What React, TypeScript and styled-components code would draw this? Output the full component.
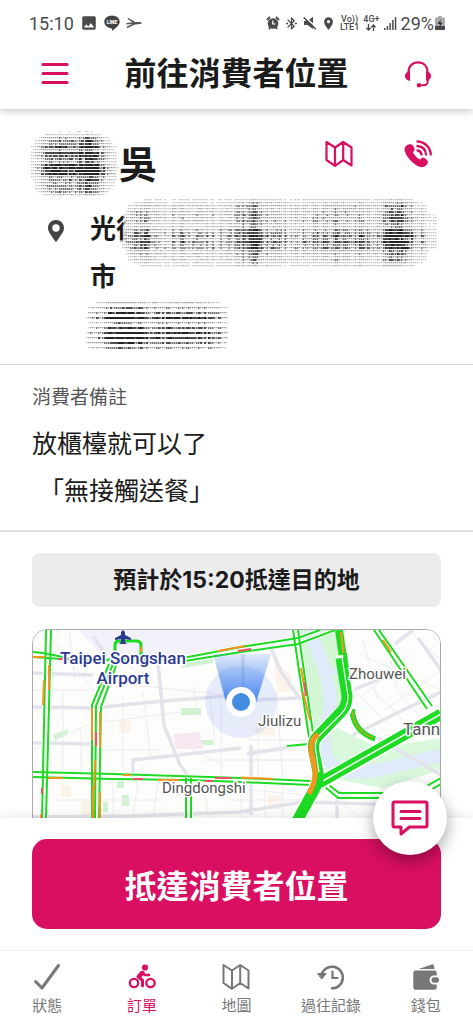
import React from "react";
import styled, { createGlobalStyle } from "styled-components";
import { MdImage, MdBluetoothConnected, MdLocationOn } from "react-icons/md";

const PINK = "#d90f62";
const GREY = "#777";
const INK = "#1b1b1b";

const GlobalStyle = createGlobalStyle`
  * { box-sizing: border-box; }
  body { margin: 0; background: #fff; }
  body, button { font-family: Inter, "Noto Sans CJK TC", sans-serif; color: ${INK}; }
  button { border: 0; padding: 0; background: none; cursor: pointer; }
  h1, h2, p { margin: 0; }
  svg { display: block; flex: none; }
`;

const Screen = styled.div`
  display: flex;
  flex-direction: column;
  height: 100vh;
  overflow: hidden;
`;

const Header = styled.header`
  position: relative;
  z-index: 2;
  background: #fff;
  box-shadow: 0 2px 8px rgba(0, 0, 0, 0.22);
`;

const StatusBar = styled.div`
  display: flex;
  justify-content: space-between;
  align-items: center;
  height: 46px;
  padding: 0 28px 0 29px;
  color: #4a4a4a;
  font-family: Roboto, sans-serif;
  font-size: 18px;
`;

const StatusGroup = styled.div<{ $gap: number }>`
  display: flex;
  align-items: center;
  gap: ${(p) => p.$gap}px;
`;

const Network = styled.span`
  font-size: 9px;
  line-height: 8px;
  font-weight: 500;
  text-align: center;
`;

const Battery = styled.span`
  display: flex;
  align-items: center;
  gap: 1px;
`;

const TitleBar = styled.div`
  display: flex;
  align-items: center;
  justify-content: space-between;
  height: 63px;
  padding: 0 40px 8px;
`;

const Title = styled.h1`
  font-size: 32px;
  line-height: 40px;
  font-weight: 700;
`;

const IconButton = styled.button`
  display: flex;
  align-items: center;
  justify-content: center;
  width: 30px;
  height: 40px;
  color: ${PINK};
`;

const Content = styled.main`
  flex: 1;
  min-height: 0;
  overflow-y: auto;
  scrollbar-width: none;
`;

const Customer = styled.section`
  padding: 21px 34px 15px 0;
  border-bottom: 1px solid #d9d9d9;
`;

const NameRow = styled.div`
  display: flex;
  align-items: center;
  height: 68px;
  padding: 0 6px 0 27px;
`;

const Name = styled.h2`
  flex: 1;
  font-size: 38px;
  line-height: 56px;
  font-weight: 700;
`;

const Actions = styled.div`
  display: flex;
  gap: 49px;
  padding-bottom: 20px;
`;

const Address = styled.div`
  position: relative;
  display: flex;
  gap: 26px;
  padding: 0 0 0 48px;
  margin-top: 7px;
  font-size: 26px;
  line-height: 48px;
  font-weight: 700;
`;

const PinSlot = styled.span`
  display: flex;
  align-items: center;
  height: 52px;
`;

const AddressLine = styled.p`
  height: 48px;
`;

const AddressCover = styled.div`
  position: absolute;
  top: -10px;
  left: 118px;
  right: 0;
  background: linear-gradient(to right, transparent 4px, #fff 9px);
`;

const PhoneCover = styled.div`
  position: absolute;
  top: 96px;
  left: 84px;
`;

const Note = styled.section`
  padding: 21px 32px 15px;
  border-bottom: 2px solid #dedede;
`;

const NoteLabel = styled.h2`
  font-size: 19px;
  line-height: 24px;
  font-weight: 400;
  color: #555;
  margin-bottom: 11px;
`;

const NoteText = styled.p`
  font-size: 25px;
  line-height: 47px;
  white-space: pre-wrap;
`;

const Trip = styled.section`
  display: flex;
  flex-direction: column;
  gap: 22px;
  padding: 21px 32px;
`;

const Eta = styled.p`
  padding: 11px 0;
  border-radius: 8px;
  background: #ececec;
  font-size: 23px;
  line-height: 32px;
  font-weight: 700;
  text-align: center;
`;

const MapCard = styled.div`
  height: 300px;
  overflow: hidden;
  border: 1px solid #aaa;
  border-radius: 15px;
`;

const MapLabel = styled.text<{ $size: number; $airport?: boolean }>`
  font-family: Roboto, sans-serif;
  font-size: ${(p) => p.$size}px;
  font-weight: ${(p) => (p.$airport ? 500 : 400)};
  fill: ${(p) => (p.$airport ? "#2c3a94" : "#555")};
  stroke: #fff;
  stroke-width: 3px;
  paint-order: stroke;
  stroke-linejoin: round;
`;

const Sheet = styled.footer`
  position: relative;
  z-index: 2;
  background: #fff;
  box-shadow: 0 0 12px rgba(0, 0, 0, 0.12);
`;

const ActionArea = styled.div`
  padding: 21px 32px;
`;

const ArriveButton = styled.button`
  width: 100%;
  height: 90px;
  border-radius: 15px;
  background: ${PINK};
  color: #fff;
  font-size: 32px;
  font-weight: 700;
`;

const ChatButton = styled.button`
  position: absolute;
  top: -37px;
  right: 26px;
  display: flex;
  align-items: center;
  justify-content: center;
  width: 74px;
  height: 74px;
  border-radius: 50%;
  background: #fff;
  color: ${PINK};
  box-shadow: 0 6px 16px rgba(0, 0, 0, 0.35);
`;

const TabBar = styled.nav`
  display: grid;
  grid-template-columns: repeat(5, 1fr);
  height: 74px;
  border-top: 1px solid #eee;
`;

const Tab = styled.a<{ $active?: boolean }>`
  display: flex;
  flex-direction: column;
  align-items: center;
  gap: 4px;
  padding-top: 12px;
  color: ${(p) => (p.$active ? PINK : GREY)};
  font-size: 15px;
  line-height: 22px;
  text-decoration: none;
  white-space: nowrap;
`;

/* ---------- redaction texture ---------- */

type SmudgeProps = {
  width: number;
  height: number;
  seed: number;
  rowStep: number;
  dark: [number, number, number][];
  fluid?: boolean;
  round?: boolean;
};

const noise = (n: number) => {
  const v = Math.sin(n * 127.1) * 43758.5453;
  return v - Math.floor(v);
};

function Smudge({ width, height, seed, rowStep, dark, fluid, round }: SmudgeProps) {
  const buckets: string[] = ["", "", "", "", ""];
  for (let y = 1; y < height - 1; y += rowStep) {
    const rowLevel = 0.3 + 0.7 * noise(y + seed);
    for (let x = 0; x < width; x += 2) {
      const nx = (x / width) * 2 - 1;
      const ny = (y / height) * 2 - 1;
      const power = round ? 4 : 12;
      const fade = rowStep > 3 ? 8 : 2.5;
      const edge = Math.max(0, 1 - Math.pow(Math.abs(nx), power) - Math.pow(Math.abs(ny), fade));
      let level = 0.15 + 0.5 * noise(x * 3 + seed);
      dark.forEach(([center, spread, amount]) => {
        level += amount * Math.exp(-Math.pow((x - center) / spread, 2));
      });
      const value = level * rowLevel * edge * (0.7 + 0.5 * noise(x * 7 + y * 13));
      const index = Math.min(4, Math.floor(value * 6.5));
      if (value > 0.04) {
        buckets[index] += `M${x} ${y}h${index > 2 ? 2 : 1.5}v${index > 1 ? 2 : 1.3}h-${index > 2 ? 2 : 1.5}z`;
      }
    }
  }
  return (
    <svg
      width={fluid ? "100%" : width}
      height={height}
      viewBox={`0 0 ${width} ${height}`}
      preserveAspectRatio="none"
      aria-hidden="true"
    >
      {buckets.map((d, i) => (
        <path key={i} d={d} fill="#111" opacity={0.24 + i * 0.17} />
      ))}
    </svg>
  );
}

/* ---------- icons ---------- */

const MenuIcon = () => (
  <svg width="28" height="24" viewBox="0 0 28 24" stroke="currentColor" strokeWidth="3.2" strokeLinecap="round">
    <path d="M2 2.5h24M2 11.500h24M2 20.500h24" />
  </svg>
);

const HeadsetIcon = () => (
  <svg width="28" height="28" viewBox="0 0 28 28" fill="none" stroke="currentColor">
    <path d="M4.500 12.500C4.500 6 8.500 2.300 14 2.300S23.500 6 23.500 12.500" strokeWidth="2.200" />
    <path d="M23.800 19v1.500c0 3-1.500 4.800-4.300 4.800H15" strokeWidth="1.900" />
    <path d="M6 11v10C3 20.500.9 18.500.9 16S3 11.500 6 11ZM22 11v10c3-.5 5.100-2.500 5.100-5S25 11.500 22 11Z" fill="currentColor" stroke="none" />
    <circle cx="15" cy="25.200" r="2.200" fill="currentColor" stroke="none" />
  </svg>
);

const PhoneIcon = () => (
  <svg width="28" height="28" viewBox="0 0 28 28" fill="none" stroke="currentColor" strokeWidth="2.300" strokeLinecap="round">
    <path
      d="M7.500 4.500C5 3.500 1 5.500.5 9 .5 15 9 25 16.500 27c3 1 7-1.500 7.500-5 .2-1.500-4-5.200-5.500-4.500L16 19.500C13 18 10.500 15.500 9 12.500L10.500 10C11 8.500 9 5 7.500 4.500Z"
      fill="currentColor"
      stroke="none"
    />
    <path d="M13.500 1.500C21 2 26.500 7.500 26.800 14.500M13.500 6C18.500 6.500 21.700 9.800 22 14.500M13.500 10.500c2.300.3 3.700 1.700 4 4" />
  </svg>
);

const FoldMapIcon = ({ stroke = 2.2 }: { stroke?: number }) => (
  <svg width="28" height="28" viewBox="0 0 28 28" fill="none" stroke="currentColor" strokeWidth={stroke} strokeLinejoin="round">
    <path d="M1.500 2 10 7.500 18.200 2 26.500 7.500v18L18.200 20 10 25.800 1.500 20ZM10 7.500v18M18.200 2V20" />
  </svg>
);

const PinIcon = () => (
  <svg width="16" height="22" viewBox="0 0 16 22">
    <path fill="#444" fillRule="evenodd" d="M8 0C3.500 0 0 3.400 0 7.800 0 13 4.500 16.500 6.800 20.800q1.200 1.800 2.400 0C11.500 16.500 16 13 16 7.800 16 3.400 12.500 0 8 0Zm0 4.300a3.700 3.700 0 1 1 0 7.400 3.700 3.700 0 0 1 0-7.400Z" />
  </svg>
);

const ChatIcon = () => (
  <svg width="38" height="36" viewBox="0 0 38 36" fill="none" stroke="currentColor" strokeWidth="3" strokeLinejoin="round" strokeLinecap="round">
    <path d="M3.500 2h31a1.500 1.500 0 0 1 1.500 1.500v22a1.500 1.500 0 0 1-1.500 1.500H18.500L10 34v-7H3.500A1.500 1.500 0 0 1 2 25.500v-22A1.500 1.500 0 0 1 3.500 2ZM10 11.500h19M10 18.500h19" />
  </svg>
);

const CheckIcon = () => (
  <svg width="28" height="28" viewBox="0 0 28 28" fill="none" stroke="currentColor" strokeWidth="3" strokeLinecap="round" strokeLinejoin="round">
    <path d="M2.500 18.500 9 25 25.500 2.500" />
  </svg>
);

const BikeIcon = () => (
  <svg width="28" height="28" viewBox="0 0 28 28" fill="none" stroke="currentColor" strokeLinecap="round" strokeLinejoin="round">
    <circle cx="6" cy="20" r="4.200" strokeWidth="2.300" />
    <circle cx="22.500" cy="20" r="4.200" strokeWidth="2.300" />
    <circle cx="17" cy="4.500" r="3.100" fill="currentColor" stroke="none" />
    <path d="M13.500 9.500 10 13.800l4.500 3.400v5.600" strokeWidth="3" />
    <path d="M13.800 9.200 17 12h4" strokeWidth="2.600" />
    <path d="M11 13.500 14.500 10" strokeWidth="4.200" />
  </svg>
);

const HistoryIcon = () => (
  <svg width="28" height="28" viewBox="0 0 28 28" fill="none" stroke="currentColor" strokeWidth="2.600" strokeLinecap="round">
    <path d="M4.500 12A10.800 10.800 0 1 1 15 25.300" />
    <path d="M15.500 8.500v6.500h5" strokeWidth="2.200" />
    <path d="M.8 10.500h8.400L5 15.800Z" fill="currentColor" strokeWidth="1" strokeLinejoin="round" />
  </svg>
);

const WalletIcon = () => (
  <svg width="28" height="28" viewBox="0 0 28 28" fill="currentColor">
    <path d="M6.500 6 20.500 1.200q1-.2 1.200.8L22.500 6Z" />
    <path d="M3.500 7.500h19a2.200 2.200 0 0 1 2.200 2.200v2.800H22a4.500 4.500 0 0 0 0 9h2.700v3a2.200 2.200 0 0 1-2.200 2.200h-19a2.200 2.200 0 0 1-2.200-2.200V9.700a2.200 2.200 0 0 1 2.200-2.200Z" />
    <rect x="19.500" y="14.200" width="7.500" height="5.600" rx="2.500" />
  </svg>
);

const AlarmIcon = () => (
  <svg width="14" height="14" viewBox="0 0 14 14">
    <path d="M1 4 4 1M10 1l3 3M3 13l1.500-2M11 13l-1.500-2" stroke="#4a4a4a" strokeWidth="2" />
    <circle cx="7" cy="7.500" r="5.300" fill="#4a4a4a" />
    <path d="M6.800 4.500V8H9.500" fill="none" stroke="#fff" strokeWidth="1.200" />
  </svg>
);

const MuteIcon = () => (
  <svg width="14" height="14" viewBox="0 0 14 14">
    <path d="M1 5H4.500L10 .8V13L4.500 9H1Z" fill="#4a4a4a" />
    <path d="M1.500 .5 14 12" stroke="#fff" strokeWidth="1.500" />
    <path d="M.7 1.500 12.800 13.300" stroke="#4a4a4a" strokeWidth="1.600" />
  </svg>
);

const LineAppIcon = () => (
  <svg width="16" height="16" viewBox="0 0 16 16">
    <path d="M8 .5c4.300 0 7.700 2.800 7.700 6.300 0 3-3 5.700-7 8.700-.6.400-.8.200-.7-.5l.1-1.600C3.500 13.200.3 10.300.3 6.800.3 3.300 3.700.5 8 .5Z" fill="#444" />
    <text x="8" y="8.800" textAnchor="middle" fontSize="5" fontWeight="900" fontFamily="Roboto" fill="#fff">LINE</text>
  </svg>
);

const ArrowAppIcon = () => (
  <svg width="16" height="12" viewBox="0 0 16 12" fill="none" stroke="#555" strokeWidth="1.500">
    <path d="M2 1.500 8 5.500 15.500 6 8 7 1 10.500M.5 6.800 8 6M6 3.500 9 6" />
  </svg>
);

const SignalIcon = () => (
  <svg width="13" height="13" viewBox="0 0 13 13" fill="#4a4a4a">
    <path d="M0 11h1.500v2H0zM2.700 9h1.500v4H2.700zM5.400 6h1.500v7H5.400zM8.100 3h1.500v10H8.100zM10.800 0h1.500v13h-1.500z" />
  </svg>
);

const BatteryIcon = () => (
  <svg width="10" height="14" viewBox="0 0 10 14">
    <path d="M3 0h4v1.500h2q1 0 1 1V13q0 1-1 1H1q-1 0-1-1V2.500q0-1 1-1h2Z" fill="#aaa" />
    <path d="M0 10h10v3q0 1-1 1H1q-1 0-1-1Z" fill="#4a4a4a" />
    <path d="M6 3 2.500 8H5l-.8 3.500L7.700 6.500H5.200Z" fill="#333" />
  </svg>
);

const NetworkArrows = () => (
  <svg width="10" height="7" viewBox="0 0 10 7" fill="none" stroke="#4a4a4a" strokeWidth="1.300">
    <path d="M2.500 0v6M.4 3.800 2.500 6l2.100-2.200M7.500 7V1M5.400 3.200 7.500 1l2.100 2.200" />
  </svg>
);

const NetworkColumn = styled.span`
  display: flex;
  flex-direction: column;
  align-items: center;
  gap: 1px;
`;

/* ---------- map ---------- */

const GREEN = "#1ddb22";
const ORANGE = "#f7941d";
const RED = "#f0506a";

const minorStreets =
  "M0 60H60M100 55 205 66M20 10 62 62M0 120 66 90M20 170H130M75 20 130 60M110 62 118 130M160 56 165 88M176 60 182 110M70 92 150 82M68 120H130M90 66V140M48 100V142M30 60V140M80 150V189M105 150 100 189M125 150 120 189M170 152 176 189M225 100V150M243 60 250 150M215 110H276M214 120H278M214 130H280M220 160 270 165M196 170H270M208 152V189M232 152V189M250 152V189M326 24 408 60M330 66 380 20M352 80 408 40M322 60 350 90M350 0 365 60M375 0 408 30M362 60 400 100M340 110 350 125M330 10 345 70M320 40 370 90M340 180 408 170M310 175 330 189M350 172 360 189M380 158 390 189M150 115 190 135M170 130H250M188 70V150M20 20V60M36 0 42 50";

const majorStreets =
  "M0 77 60 78 130 71 208 65M0 43 60 45M0 113 62 114M125 33 131 95 147 135 158 150M100 150V130L208 118M0 187 100 186 206 182 270 172 340 174 408 184M238 18 248 42 268 70M222 70 264 68M210 22V60M275 114 214 124M218 115V185M304 168V189M320 105 360 85 408 62M362 14 380 0M385 8 408 40M320 60 370 40M345 108 408 145M60 6 70 20";

const thinRoads = [
  "M13 0 9 189M18 0 13 189",
  "M0 22 10 23 45 30 150 28 208 17 265 8 287 0M0 27 42 30 152 31 208 22 265 14 302 0",
  "M0 142 80 144 208 148 278 151M0 147 80 149 155 150 208 152 278 155",
  "M76 34 59 75V189M80 34 63 76 62 189M83 36 68 77 66 189",
  "M153 148V189M158 148V189",
  "M260 0 277 114M265 0 281 110",
  "M254 116 276 114",
  "M341 0 394 79M346 0 399 76",
  "M291 156 305 168H360M296 155 306 163H360",
  "M390 158 408 148M394 162 408 154",
];

function TrafficMap() {
  return (
    <svg width="100%" height="300" viewBox="0 0 407 300" preserveAspectRatio="xMidYMin slice" role="img" aria-label="Map">
      <defs>
        <linearGradient id="beam" x1="0" y1="0" x2="0" y2="1">
          <stop offset="0" stopColor="#3b7ff0" stopOpacity="0.15" />
          <stop offset="0.600" stopColor="#3b7ff0" stopOpacity="0.65" />
          <stop offset="1" stopColor="#3b7ff0" />
        </linearGradient>
      </defs>
      <rect width="410" height="300" fill="#fdfdfc" />
      <path d="M45 0H260L262 12 150 34 72 28Z" fill="#f3f1fa" />
      <path d="M265 0H304L312 68 280 106Z" fill="#d3f7d5" />
      <path d="M284 112 300 96 345 118 408 108V140L350 158 296 148Z" fill="#d9f8dc" />
      <path d="M20 105 35 99V103L22 111ZM148 78h20v7h-20ZM168 110h13v5h-13ZM84 150h7v8h-7ZM89 165h7v11h-7ZM70 172h5v10h-5ZM152 29 180 26V33L148 38Z" fill="#cff3d1" />
      <path d="M140 104 167 102 170 119H143Z" fill="#f7e8f2" />
      <path d="M86 90h12v13H86ZM28 155h10v12H28ZM240 30 258 45V62H245ZM222 95h20v10h-20ZM235 165h14v14h-14ZM48 170h12v15H48Z" fill="#fcf3ea" />
      <path d="M276 0C284 20 292 34 296 60S290 95 291 112 297 141 318 142 355 138 408 125" fill="none" stroke="#dfeafa" strokeWidth="13" />
      <path d="M280 28 306 44" stroke="#dfeafa" strokeWidth="4" />
      <path d={minorStreets} fill="none" stroke="#ececf0" strokeWidth="1" />
      <path d={majorStreets} fill="none" stroke="#e3e3ec" strokeWidth="3.500" />

      {thinRoads.map((d) => (
        <path key={d} d={d} fill="none" stroke="#fff" strokeWidth="4" />
      ))}
      {thinRoads.map((d) => (
        <path key={`road-${d}`} d={d} fill="none" stroke={GREEN} strokeWidth="2" />
      ))}
      <path d="M82 26V15Q82 11 86 11H103Q108 11 108 15V26Q98 32 82 26" fill="none" stroke={GREEN} strokeWidth="3" />
      <path d="M16 35V60M11 50 10 75M0 27H12M185 21 212 16M59 78V110M67 82V118M62 130 61 160M60 156V189M67 162V189M15 148H30M90 145H98M125 150H146M208 147.500 240 149M268 38 272 60M270 62 277 90M350 10 358 22M8 184V189M108 17V22" fill="none" stroke={ORANGE} strokeWidth="2" />
      <path d="M25 29H40M205 21 218 19M63 102V116M100 149H110M182 148H198M9 158V164M271 52 273 66M172 151H180" fill="none" stroke={RED} strokeWidth="2" />

      <g fill="none" strokeLinejoin="round">
        <path d="M319 79Q320 101 342 109" stroke={GREEN} strokeWidth="5.500" />
        <path d="M319 81Q321 100 340 108" stroke={ORANGE} strokeWidth="1.200" />
        <path d="M306 0 310 28" stroke={GREEN} strokeWidth="8" />
        <path d="M308 2 311 28" stroke={ORANGE} strokeWidth="2" />
        <path d="M310 25 315 66Q315 77 309 83L284 107Q279 112 281 122L285 142Q286 153 281 160L264 191" stroke="#fff" strokeWidth="14" />
        <path d="M287 153 408 84" stroke="#fff" strokeWidth="14" />
        <path d="M286 153 408 84" stroke={GREEN} strokeWidth="11" />
        <path d="M288 152 408 84" stroke="#fff" strokeWidth="1.500" />
        <path d="M308 28 314 66Q314 76 308 82L284 107Q279 112 281 122L285 142Q286 153 281 160L264 191" stroke={GREEN} strokeWidth="11" />
        <path d="M309 27 315 66Q315 77 309 83L285 107Q281 113 283 122L286 142" stroke="#fff" strokeWidth="1.200" />
        <path d="M312 24 314 40" stroke={GREEN} strokeWidth="4" strokeLinecap="round" />
        <path d="M285 104Q277 111 278 121L282 140Q283 151 276 164" stroke={ORANGE} strokeWidth="5" />
      </g>

      <circle cx="208" cy="72" r="36" fill="#4c7df0" opacity="0.130" />
      <path d="M180 24H238L222 76H194Z" fill="url(#beam)" />
      <circle cx="208" cy="72" r="15" fill="#fff" />
      <circle cx="208" cy="72" r="9" fill="#448ce0" />

      <path d="M90 0 92 2V5L98 8V10L92 9V12L94 14H86L88 12V9L82 10V8L88 5V2Z" fill="#2c3a94" />
      <MapLabel $size={17} $airport x="90" y="34" textAnchor="middle">Taipei Songshan</MapLabel>
      <MapLabel $size={17} $airport x="90" y="54" textAnchor="middle">Airport</MapLabel>
      <MapLabel $size={15} x="225" y="96">Jiulizu</MapLabel>
      <MapLabel $size={15} x="316" y="49">Zhouwei</MapLabel>
      <MapLabel $size={17} x="370" y="105">Tann</MapLabel>
      <MapLabel $size={15} x="129" y="163">Dingdongshi</MapLabel>
    </svg>
  );
}

export default function App() {
  return (
    <Screen>
      <GlobalStyle />
      <Header>
        <StatusBar>
          <StatusGroup $gap={6}>
            <span>15:10</span>
            <MdImage size={18} />
            <LineAppIcon />
            <ArrowAppIcon />
          </StatusGroup>
          <StatusGroup $gap={4}>
            <AlarmIcon />
            <MdBluetoothConnected size={15} />
            <MuteIcon />
            <MdLocationOn size={15} />
            <Network>
              Vo))
              <br />
              LTE1
            </Network>
            <NetworkColumn>
              <Network>4G+</Network>
              <NetworkArrows />
            </NetworkColumn>
            <SignalIcon />
            <Battery>
              29%
              <BatteryIcon />
            </Battery>
          </StatusGroup>
        </StatusBar>
        <TitleBar>
          <IconButton aria-label="Menu">
            <MenuIcon />
          </IconButton>
          <Title>前往消費者位置</Title>
          <IconButton aria-label="Support">
            <HeadsetIcon />
          </IconButton>
        </TitleBar>
      </Header>

      <Content>
        <Customer>
          <NameRow>
            <Smudge width={92} height={68} seed={4} rowStep={3} dark={[[26, 16, 0.6], [62, 16, 0.7]]} round />
            <Name>吳</Name>
            <Actions>
              <IconButton aria-label="Open map">
                <FoldMapIcon />
              </IconButton>
              <IconButton aria-label="Call">
                <PhoneIcon />
              </IconButton>
            </Actions>
          </NameRow>
          <Address>
            <PinSlot>
              <PinIcon />
            </PinSlot>
            <div>
              <AddressLine>光復</AddressLine>
              <AddressLine>市</AddressLine>
              <AddressLine />
            </div>
            <AddressCover>
              <Smudge
                width={320}
                height={74}
                seed={9}
                rowStep={3}
                dark={[[18, 14, 0.4], [134, 12, 0.6], [225, 20, 0.3], [278, 14, 0.8]]}
                fluid
              />
            </AddressCover>
            <PhoneCover>
              <Smudge width={144} height={50} seed={2} rowStep={5} dark={[[40, 18, 0.8], [100, 40, 0.4]]} />
            </PhoneCover>
          </Address>
        </Customer>

        <Note>
          <NoteLabel>消費者備註</NoteLabel>
          <NoteText>{"放櫃檯就可以了\n 「無接觸送餐」"}</NoteText>
        </Note>

        <Trip>
          <Eta>預計於15:20抵達目的地</Eta>
          <MapCard>
            <TrafficMap />
          </MapCard>
        </Trip>
      </Content>

      <Sheet>
        <ActionArea>
          <ArriveButton>抵達消費者位置</ArriveButton>
        </ActionArea>
        <ChatButton aria-label="Chat">
          <ChatIcon />
        </ChatButton>
        <TabBar>
          <Tab href="#status">
            <CheckIcon />
            狀態
          </Tab>
          <Tab href="#orders" $active>
            <BikeIcon />
            訂單
          </Tab>
          <Tab href="#map">
            <FoldMapIcon stroke={2} />
            地圖
          </Tab>
          <Tab href="#history">
            <HistoryIcon />
            過往記錄
          </Tab>
          <Tab href="#wallet">
            <WalletIcon />
            錢包
          </Tab>
        </TabBar>
      </Sheet>
    </Screen>
  );
}
